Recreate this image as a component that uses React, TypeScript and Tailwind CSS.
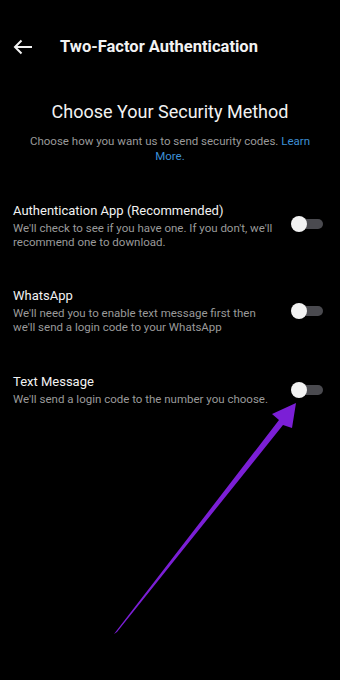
import React from "react";

function Toggle() {
  return (
    <div className="relative w-[32px] h-[16px] shrink-0">
      <div className="absolute left-[6px] right-0 top-[3px] h-[10px] rounded-full bg-[#4a4a4f]" />
      <div className="absolute left-0 top-0 w-[16px] h-[16px] rounded-full bg-[#f2f2f2]" />
    </div>
  );
}

function Row({ title, desc, toggleOffset }: { title: string; desc: React.ReactNode; toggleOffset: string }) {
  return (
    <div className="flex items-start justify-between pl-[13px] pr-[17px]">
      <div className="flex flex-col">
        <div className="text-[13px] leading-[18px] text-[#f2f2f2]">{title}</div>
        <div className="text-[11.5px] leading-[14px] text-[#9a9a9a] mt-[1px]">{desc}</div>
      </div>
      <div className={toggleOffset}>
        <Toggle />
      </div>
    </div>
  );
}

export default function App() {
  return (
    <div
      className="relative w-[340px] h-[680px] bg-black overflow-hidden"
      style={{ fontFamily: "Roboto, 'Noto Sans', sans-serif" }}
    >
      <div className="flex items-start h-[100px] pl-[13px] pt-[38px]">
        <svg width="20" height="16" viewBox="0 0 20 16" className="mt-[1px]">
          <path d="M19 8H2M8.5 1.5L2 8l6.5 6.5" fill="none" stroke="#f2f2f2" strokeWidth="2" />
        </svg>
        <div className="ml-[27px] text-[16.5px] leading-[18px] font-bold text-[#f2f2f2]">Two-Factor Authentication</div>
      </div>
      <div className="flex flex-col items-center">
        <div className="text-[18px] leading-[24px] text-[#f2f2f2]">Choose Your Security Method</div>
        <div className="mt-[10px] text-[11.5px] leading-[15px] text-[#9a9a9a] text-center px-[28px]">
          Choose how you want us to send security codes. <span className="text-[#3d8fd6]">Learn More.</span>
        </div>
      </div>
      <div className="mt-[38px]">
        <Row
          title="Authentication App (Recommended)"
          desc={<>We'll check to see if you have one. If you don't, we'll<br />recommend one to download.</>}
          toggleOffset="mt-[14px]"
        />
      </div>
      <div className="mt-[38px]">
        <Row
          title="WhatsApp"
          desc={<>We'll need you to enable text message first then<br />we'll send a login code to your WhatsApp</>}
          toggleOffset="mt-[16px]"
        />
      </div>
      <div className="mt-[39px]">
        <Row
          title="Text Message"
          desc="We'll send a login code to the number you choose."
          toggleOffset="mt-[9px]"
        />
      </div>
      <svg className="absolute left-0 top-0 pointer-events-none" width="340" height="680" viewBox="0 0 340 680">
        <polygon points="114,634 117,632 283,425 292,428 296,403 272,414 279,420" fill="#7b1fd6" />
      </svg>
    </div>
  );
}
